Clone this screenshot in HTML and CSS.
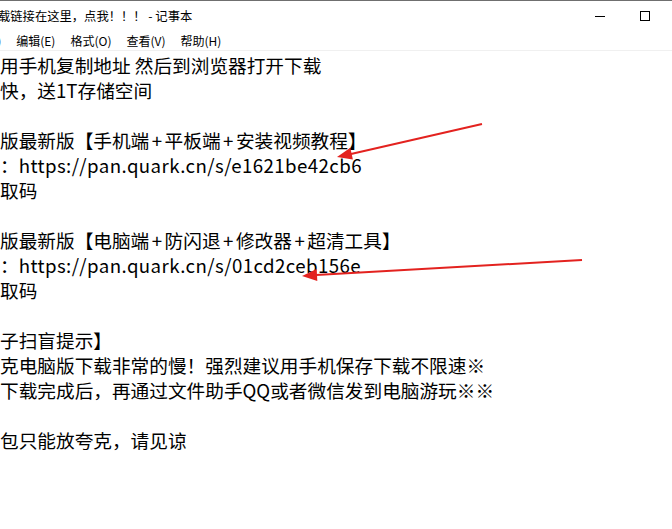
FILE: index.html
```html
<!DOCTYPE html>
<html lang="zh-CN">
<head>
  <meta charset="UTF-8">
  <title>记事本</title>
  <link rel="stylesheet" href="styles.css">
</head>
<body>

<div class="window">
  <div class="titlebar">
    <div class="title">载链接在这里，点我！！！ - 记事本</div>
    <div class="controls">
      <span class="btn"><i class="min"></i></span>
      <span class="btn"><i class="max"></i></span>
    </div>
  </div>

  <div class="menubar">
    <span class="menu first">文件(F)</span>
    <span class="menu">编辑(E)</span>
    <span class="menu">格式(O)</span>
    <span class="menu">查看(V)</span>
    <span class="menu">帮助(H)</span>
  </div>

  <div class="editor">
    <div class="line">用手机复制地址 然后到浏览器打开下载</div>
    <div class="line">快，送1T存储空间</div>
    <div class="line"></div>
    <div class="line">版最新版【手机端<span class="plus">+</span>平板端<span class="plus">+</span>安装视频教程】</div>
    <div class="line">：<span class="url">https://pan.quark.cn/s/e1621be42cb6</span></div>
    <div class="line">取码</div>
    <div class="line"></div>
    <div class="line">版最新版【电脑端<span class="plus">+</span>防闪退<span class="plus">+</span>修改器<span class="plus">+</span>超清工具】</div>
    <div class="line">：<span class="url">https://pan.quark.cn/s/01cd2ceb156e</span></div>
    <div class="line">取码</div>
    <div class="line"></div>
    <div class="line">子扫盲提示】</div>
    <div class="line">克电脑版下载非常的慢！强烈建议用手机保存下载不限速※</div>
    <div class="line">下载完成后，再通过文件助手QQ或者微信发到电脑游玩※※</div>
    <div class="line"></div>
    <div class="line">包只能放夸克，请见谅</div>
  </div>

  <!-- red arrows drawn over the text -->
  <svg class="arrows" width="672" height="529" viewBox="0 0 672 529">
    <line x1="482" y1="124" x2="351" y2="154" stroke="#e3221f" stroke-width="2"/>
    <polygon points="337,157 350.3,147.8 352.9,159.6" fill="#e3221f"/>
    <line x1="582" y1="260" x2="316" y2="275" stroke="#e3221f" stroke-width="2"/>
    <polygon points="302,276 316.7,269.1 317.3,281.1" fill="#e3221f"/>
  </svg>
</div>

</body>
</html>
```

FILE: styles.css
```css
html, body {
  margin: 0;
  padding: 0;
  background: #ffffff;
  overflow: hidden;
}
.window {
  position: relative;
  width: 672px;
  height: 529px;
  font-family: "Noto Sans CJK SC", "Noto Sans", sans-serif;
  color: #000;
}
.titlebar {
  display: flex;
  align-items: center;
  justify-content: space-between;
  height: 30px;
  border-top: 1px solid #6f6f6f;
}
.title {
  font-size: 12.3px;
  margin-left: -2px;
  white-space: nowrap;
}
.controls {
  display: flex;
  padding-right: 5px;
}
.btn {
  display: flex;
  align-items: center;
  justify-content: center;
  width: 45px;
  height: 30px;
}
.min {
  display: block;
  width: 10px;
  height: 1px;
  background: #000;
}
.max {
  display: block;
  width: 8px;
  height: 8px;
  border: 1px solid #000;
}
.menubar {
  display: flex;
  height: 19px;
  align-items: center;
  border-bottom: 1px solid #f0f0f0;
  font-size: 12px;
  white-space: nowrap;
}
.menu {
  padding: 0 7.5px;
}
.menu.first {
  margin-left: -45px;
}
.editor {
  padding-top: 1px;
  font-size: 18.67px;
  line-height: 25px;
}
.line {
  height: 25px;
  white-space: pre;
}
.plus {
  padding: 0 2.5px;
}
.url {
  letter-spacing: 0.42px;
}
.arrows {
  position: absolute;
  left: 0;
  top: 0;
}
```
